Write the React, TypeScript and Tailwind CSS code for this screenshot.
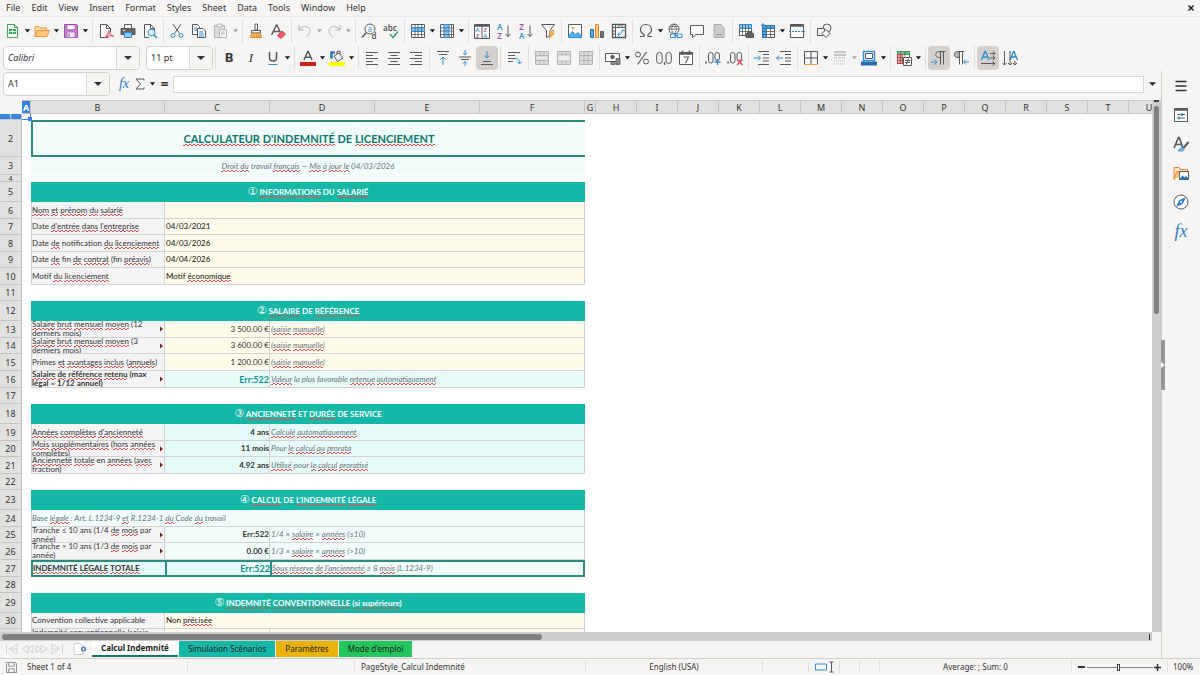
import { Fragment } from "react";
import type { ReactNode } from "react";
import clsx from "clsx";

const GRAY = "#57595b";
const BLUE = "#2f8fd6";

/* ---------- icons ---------- */

const Ic = ({ children, dim }: { children: ReactNode; dim?: boolean }) => (
  <svg
    viewBox="0 0 16 16"
    className={clsx("h-4 w-4 shrink-0 overflow-visible", dim && "opacity-40")}
    fill="none"
    stroke={GRAY}
    strokeWidth="1"
  >
    {children}
  </svg>
);

const Glyph = ({ x, y, size, fill, bold, children }: { x: number; y: number; size: number; fill?: string; bold?: boolean; children: string }) => (
  <text x={x} y={y} fontSize={size} fill={fill ?? GRAY} stroke="none" fontFamily="Noto Sans, sans-serif" fontWeight={bold ? 600 : 400}>
    {children}
  </text>
);

const icons: Record<string, ReactNode> = {
  new: <><path d="M2.5 1.5h7l3 3v10h-10z" fill="#fff" stroke="#3aa757" /><path d="M9.5 1.5v3h3" stroke="#3aa757" /><path d="M4 6h7v5H4z" fill="#3aa757" stroke="none" /><path d="M4 8.5h7M7.5 6v5" stroke="#fff" strokeWidth=".7" /></>,
  open: <><path d="M1 13.5V3.5h4l1.5 1.5h6v3" fill="#fbd9a5" stroke="#e9973a" /><path d="M1 13.5L3.5 7.5h12l-2.5 6z" fill="#fbc883" stroke="#e9973a" /></>,
  save: <><path d="M1.5 1.5h12l1 1v12h-13z" fill="#c67fd0" stroke="#9d4fb0" /><path d="M4 2h8v4.500H4z" fill="#fff" stroke="#9d4fb0" strokeWidth=".6" /><path d="M4 9h8v5.500H4z" fill="#f5e6f8" stroke="#9d4fb0" strokeWidth=".6" /><path d="M6 10.500v3.500" stroke="#7c3a90" /></>,
  pdf: <><path d="M10 14.5H2.500v-13h6l4 4v4" fill="#fff" /><path d="M8.500 1.500v4h4" /><path d="M7 14.500c2-2 3.500-5 3.500-7 1 3 2.500 5 5 5.500-3-.5-6 0-8.500 1.500z" stroke="#e0485a" fill="#f7c4ca" /></>,
  print: <><path d="M4.500 1.500h7v4h-7z" fill="#fff" /><path d="M1 5.500h14v6H1z" fill="#606466" /><path d="M4.500 9.500h7v5h-7z" fill="#8ecbf4" stroke={BLUE} /><path d="M3 7.500h2" stroke="#fff" /></>,
  preview: <><path d="M12.500 7V5.500l-4-4h-6v13H7" fill="#fff" /><path d="M8.500 1.500v4h4" /><circle cx="9.500" cy="9.500" r="3.500" fill="#d8eefc" stroke={BLUE} /><path d="M12 12l3 3" stroke={BLUE} strokeWidth="1.500" /></>,
  cut: <><path d="M4 1l6.500 9.500M12 1L5.500 10.500" /><circle cx="4" cy="12.500" r="2" stroke={BLUE} /><circle cx="12" cy="12.500" r="2" stroke={BLUE} /></>,
  copy: <><path d="M1.500 1.500h5l2 2v8h-7z" fill="#fff" /><path d="M6.500 5.500h5.500l2.500 2.500v6.500h-8z" fill="#fff" /><path d="M3 5h3M3 7h3" stroke={BLUE} /><path d="M8 9h4M8 11h5M8 13h5" stroke={BLUE} /></>,
  paste: <><path d="M1.500 2.500h10v12h-10z" fill="#bbb" /><path d="M4 1h5v3H4z" fill="#eee" /><path d="M6.500 6.500h7v8h-7z" fill="#fff" /><path d="M8 9h4M8 11h4" /></>,
  clone: <><path d="M7 1h2.500v6H7z" fill="#fff" /><path d="M3.500 7.500h9v2.500h-9z" fill="#eee" /><path d="M3.500 10.500h9l1 4h-11z" fill="#f9b86a" stroke="#e08a2c" /><path d="M6 12v2M8.500 12v2M11 12v2" stroke="#e08a2c" /></>,
  clear: <><path d="M1.500 12L6.500 2h.5l4.500 10M3.500 8.500h6" strokeWidth="1.400" /><path d="M7.500 12.500l4.500-4.500 3.500 3-4.500 4.500z" fill="#ee5a68" stroke="#d6404f" /></>,
  undo: <><path d="M2 2v5h5M2 7C5 2 13 2.500 13 8c0 3-2 4.500-4 6" /></>,
  redo: <><path d="M14 2v5H9M14 7C11 2 3 2.500 3 8c0 3 2 4.500 4 6" /></>,
  find: <><circle cx="9" cy="6" r="5" fill="#fff" /><path d="M5.500 9.500L1 14.500" strokeWidth="1.500" /><Glyph x={6.500} y={8.500} size={8} fill={BLUE}>a</Glyph><Glyph x={10.500} y={15.500} size={8} bold>d</Glyph></>,
  spell: <><Glyph x={0} y={8} size={8} bold>abc</Glyph><path d="M7 11l3 3.500 5-6" stroke="#35a66a" strokeWidth="1.500" /></>,
  row: <><path d="M1.500 1.500h13v13h-13z" fill="#fff" /><path d="M1.500 4.500h13v4h-13z" fill="#7cc0f0" stroke={BLUE} /><path d="M1.500 11.500h13M5 1.500v13M8 1.500v13M11.500 1.500v13" strokeWidth=".8" /></>,
  col: <><path d="M1.500 1.500h13v13h-13z" fill="#fff" /><path d="M5 1.500h5v13H5z" fill="#7cc0f0" stroke={BLUE} /><path d="M12.500 1.500v13M1.500 5h13M1.500 8h13M1.500 11.500h13" strokeWidth=".8" /></>,
  sort: <><path d="M.5 1.500h15v14H.5z" fill="#fff" /><path d="M.5 2.500h15" strokeWidth="2.500" /><path d="M8 3v12.500" /><Glyph x={1.500} y={9} size={6} fill={BLUE} bold>A</Glyph><Glyph x={1.700} y={15} size={6} fill="#a44fc0" bold>Z</Glyph><Glyph x={9.500} y={9} size={6} fill="#a44fc0" bold>Z</Glyph><Glyph x={9.300} y={15} size={6} fill={BLUE} bold>A</Glyph></>,
  sortAsc: <><Glyph x={1} y={7} size={8} fill={BLUE} bold>A</Glyph><Glyph x={1.200} y={15.500} size={8} fill="#a44fc0" bold>Z</Glyph><path d="M12 2.500v11M9.500 11l2.500 2.500 2.500-2.500" /></>,
  sortDesc: <><Glyph x={1.200} y={7} size={8} fill="#a44fc0" bold>Z</Glyph><Glyph x={1} y={15.500} size={8} fill={BLUE} bold>A</Glyph><path d="M12 2.500v11M9.500 11l2.500 2.500 2.500-2.500" /></>,
  filter: <><path d="M1.500 1.500h13l-4.500 6v5l-3.500 2v-7z" fill="#fff" /><path d="M12.500 7L9 11.500h2L9.500 15.500l5-5.500h-2.500l2-3z" fill="#fbb65c" stroke="#e88e24" strokeWidth=".7" /></>,
  image: <><path d="M1.500 1.500h13v13h-13z" fill="#fff" /><path d="M1.500 13l4-4.500 3 3 2.500-2 3.500 3.500v1.500h-13z" fill="#5aaeea" stroke={BLUE} /><circle cx="6" cy="5" r="1.300" fill="#f5a742" stroke="none" /></>,
  chart: <><path d="M1.500 6.500h3v8h-3z" fill="#5aaeea" stroke="#1f6db5" /><path d="M6.500 1.500h3v13h-3z" fill="#fbc883" stroke="#e08a2c" /><path d="M11.500 8.500h3v6h-3z" fill="#77797b" /></>,
  pivot: <><path d="M1.500 1.500h13v13h-13z" fill="#fff" strokeWidth="1.400" /><path d="M1.500 4.500h13M4.500 1.500v13M8 1.500v3M11 1.500v3M1.500 8h3M1.500 11h3" /><path d="M7 11.500c3 0 5-2 5-4.500M8.500 9.500L6.500 11.500l2 2M10 8.500l2-2 2 2" stroke={BLUE} /></>,
  omega: <path d="M2 13.500h4v-2C4 10.500 2.500 8.500 2.500 6.500 2.500 3.500 5 1.500 8 1.500s5.500 2 5.500 5c0 2-1.500 4-3.500 5v2h4" strokeWidth="1.200" />,
  link: <><circle cx="7" cy="6" r="5" fill="#fff" /><path d="M2 6h10M7 1c-3 3-3 7 0 10M7 1c3 3 3 7 0 10M3 3.500h8" strokeWidth=".8" /><path d="M3.500 11h5v3.500h-5zM10 11h5v3.500h-5zM7 12.700h4" fill="#f6f5f3" stroke={BLUE} /></>,
  comment: <path d="M1.500 2.500h13v9H7l-3.500 3v-3h-2z" fill="#fff" />,
  header: <><path d="M3 1.500h7l3 3v10H3z" fill="#ccc" stroke="#aaa" /><path d="M5 11.500h6" stroke="#999" /></>,
  area: <><path d="M1.500 1.500h12v11h-12z" fill="#fff" /><path d="M1.500 1.500h12v4h-12z" fill="#7cc0f0" stroke={BLUE} /><path d="M1.500 8.500h12M4.500 1.500v11M7.500 1.500v11M10.500 1.500v8" strokeWidth=".8" /><path d="M8 10.500h7.500v4H8zM9.500 8.500h4.500v2H9.500z" fill="#606466" /></>,
  freeze: <><path d="M2.500 2.500h12v12h-12z" fill="#fff" /><path d="M2.500 2.500h4v12h-4zM2.500 2.500h12v3h-12z" fill="#4c9fe0" stroke="#2a75b8" /><path d="M6.500 8.500h8M6.500 11.500h8M10.500 3v11.500M2.500 8.500h4M2.500 11.500h4" strokeWidth=".8" /><path d="M1 2h4M3 0v4" stroke={BLUE} /></>,
  split: <><path d="M1.500 1.500h13v13h-13z" fill="#fff" /><path d="M1.500 2.500h13" strokeWidth="2.500" /><path d="M0 8.500h16" stroke={BLUE} strokeDasharray="2 1" /></>,
  shapes: <><circle cx="11" cy="5" r="4" /><path d="M1.500 5.500h7v7h-7z" fill="#f6f5f3" /><path d="M10 6.500l4 4-4 4-4-4z" fill="#f6f5f3" /></>,
  underline: <><path d="M4.500 2v6c0 4 7 4 7 0V2" strokeWidth="1.500" /><path d="M3.500 14.500h9" stroke={BLUE} /></>,
  fontColor: <><path d="M4 10L7.700 1.500h.6L12 10M5.300 7.200h5.400" strokeWidth="1.500" /><path d="M0 12h16v4H0z" fill="#c9211e" stroke="none" /></>,
  highlight: <><path d="M2 2.500h4M2.500 1.500v7" stroke="#2a75b8" strokeWidth="2.500" /><path d="M5 6l5-3 4 5-5.500 3.500zM8 4V1.500l3-.5v3" fill="#eee" /><path d="M0 12h16v4H0z" fill="#ff0" stroke="none" /></>,
  left: <path d="M2 2.500h12M2 5.500h7M2 8.500h12M2 11.500h7M2 14.500h12" />,
  center: <path d="M2 2.500h12M4.500 5.500h7M2 8.500h12M4.500 11.500h7M2 14.500h12" />,
  right: <path d="M2 2.500h12M7 5.500h7M2 8.500h12M7 11.500h7M2 14.500h12" />,
  top: <><path d="M2 1.500h12M4 4.500h8" /><path d="M8 15V7M5.500 9.500L8 7l2.500 2.500" stroke={BLUE} /></>,
  middle: <><path d="M2 7h12M4 9.500h8" /><path d="M8 0v5M6 3l2 2 2-2M8 16v-4.500M6 13.500l2-2 2 2" stroke={BLUE} /></>,
  bottom: <><path d="M4 11.500h8M2 14.500h12" /><path d="M8 1v7M5.500 5.500L8 8l2.500-2.500" stroke={BLUE} /></>,
  wrap: <><path d="M2 2.500h12M2 5.500h7M2 8.500h7M2 11.500h5" /><path d="M9 8.500c3 0 4.500 1 4.500 4.500M11 11.500l2.500 2.500 2-2.500" stroke={BLUE} /></>,
  merge: <><path d="M1.500 1.500h13v13h-13z" fill="#bbb" stroke="#555" /><path d="M1.500 5.500h13M1.500 10.500h13M6 1.500v4M10 1.500v4M6 10.500v4M10 10.500v4" stroke="#555" /><path d="M3 8h10" stroke="#fff" /></>,
  mergeCells: <><path d="M1.500 1.500h13v13h-13z" fill="#bbb" stroke="#555" /><path d="M1.500 5h13M1.500 11h13M6 1.500v3.500M10 1.500v3.500M6 11v3.500M10 11v3.500" stroke="#555" /><path d="M2 5.500h12v5H2z" fill="#ddd" stroke="none" /></>,
  unmerge: <><path d="M1.500 1.500h13v13h-13z" fill="#bbb" stroke="#555" /><path d="M1.500 5.500h13M1.500 10.500h13M6 1.500v13M10 1.500v13" stroke="#555" /></>,
  currency: <><path d="M.5 3.500h14v8H.5z" fill="#fff" /><circle cx="7.500" cy="7" r="1.700" fill={GRAY} /><path d="M6 11.500h4v3H6zM11 8.500h4v6h-4z" fill="#8a8c8e" strokeWidth=".8" /></>,
  percent: <><circle cx="4" cy="4.500" r="2.500" /><circle cx="12" cy="11.500" r="2.500" /><path d="M12.500 2l-9 12.500" strokeWidth="1.200" /></>,
  number: <><rect x=".7" y="2.500" width="5.500" height="11" rx="2.700" /><path d="M8.500 12v3" strokeWidth="1.400" /><rect x="10" y="2.500" width="5.300" height="11" rx="2.600" /></>,
  date: <><path d="M1.500 2.500h13v12h-13z" fill="#fff" /><path d="M1.500 3.500h13" strokeWidth="2.500" /><path d="M4.500 .5v3M11.500 .5v3" strokeWidth="1.500" /><path d="M5.500 7h5L7.500 13" strokeWidth="1.200" /></>,
  addDec: <><path d="M1 11.500v2" strokeWidth="1.500" /><rect x="3.500" y="2.500" width="4.500" height="10.500" rx="2.200" /><rect x="10" y="2.500" width="4.500" height="8" rx="2.200" /><path d="M12.500 9v6M9.500 12h6" stroke={BLUE} strokeWidth="1.300" /></>,
  delDec: <><path d="M1 11.500v2" strokeWidth="1.500" /><rect x="3.500" y="2.500" width="4.500" height="10.500" rx="2.200" /><rect x="10" y="2.500" width="4.500" height="8" rx="2.200" /><path d="M10 9.500l5.500 5.500M15.500 9.500L10 15" stroke="#e0485a" strokeWidth="1.300" /></>,
  indent: <><path d="M4 1.500h11M9 4.500h6M9 8h6M9 11h6M4 14.500h11" /><path d="M0 8h6M4 5.500L6.500 8 4 10.500" stroke={BLUE} /></>,
  outdent: <><path d="M4 1.500h11M9 4.500h6M9 8h6M9 11h6M4 14.500h11" /><path d="M7 8H1M3 5.500L.5 8 3 10.500" stroke={BLUE} /></>,
  borders: <><path d="M1.500 14.500v-13h13v13M8 1.500v13M1.500 8h13" /><path d="M1 14.500h14" stroke="#e8a04c" /></>,
  lineStyle: <><path d="M2 2h12M2 5h12" strokeWidth="1.500" /><path d="M2 8h12" strokeDasharray="3 1" /><path d="M2 11h12M2 14h12" strokeDasharray="1 1" /></>,
  lineColor: <><path d="M2.500 1.500h11v9h-11z" fill="#fff" stroke={BLUE} strokeWidth="1.500" /><path d="M4.500 3.500h7v5h-7z" fill="#fff" /><path d="M0 11.500h16v4H0z" fill="#2a6cab" stroke="none" /></>,
  cond: <><path d="M1.500 1.500h12v12h-12z" fill="#fff" /><path d="M1.500 1.500h12v3h-12z" fill="#69c083" stroke="#3aa757" /><path d="M1.500 4.500h5v9h-5z" fill="#f4a09b" stroke="#d6404f" /><path d="M1.500 7.500h12M1.500 10.500h12M4.500 1.500v12M9 1.500v6" strokeWidth=".7" /><path d="M7.500 7.500h8v8h-8z" fill="#fff" /><path d="M9 10.500h5M9 12.500h5M13 9l-3 5.500" /></>,
  ltr: <><path d="M14.500 1.500H8.500c-5 0-5 6 0 6h1v7M9.500 1.500v13M12.500 1.500v13" /><path d="M0 12h6M3.500 9.500L6 12l-2.500 2.500" stroke={BLUE} /></>,
  rtl: <><path d="M6.500 1.500H5c-5 0-5 6 0 6h1.500z" fill="#b5b5b5" /><path d="M5 1.500h6M6.500 1.500v13M9.500 1.500v13" /><path d="M16 12h-5M13 9.500L10.500 12l2.500 2.500" stroke={BLUE} /></>,
  textH: <><path d="M1.500 10L5 1.500h.5L9 10M2.700 7h5" stroke={BLUE} strokeWidth="1.400" /><path d="M10 3.500h5M13 1.500l2 2-2 2M10 8h5M13 6l2 2-2 2M1 13.500h14M12.500 11.500l2.500 2-2.500 2" /></>,
  textV: <><path d="M8 10l3.500-8.500h.5L15.500 10M9.500 7h5" stroke={BLUE} strokeWidth="1.400" /><path d="M2.500 1v14M.5 13l2 2 2-2M8 1v14M6 13l2 2 2-2M13 11v4M11 13l2 2 2-2" /></>,
  menu: <path d="M2.500 3.500h11M2.500 8h11M2.500 12.500h11" stroke="#333" strokeWidth="1.700" />,
  props: <><path d="M1.500 1.500h13v13h-13z" fill="#fff" /><path d="M1.500 2.500h13" strokeWidth="2.500" /><path d="M4 7.500h8M4 11h8" stroke={GRAY} /><path d="M9 6v3M6 9.500v3" stroke={BLUE} strokeWidth="1.500" /></>,
  styles: <><path d="M1 12L5.500 1.500h.7L10 12M2.700 8.500h6" strokeWidth="1.700" /><path d="M15.500 6l-5 6" strokeWidth="2" /><path d="M5 14.500c2 0 2-2.500 4-3 2 0 2.500 1.500 1.500 2.500-1.500 1.300-4 1.300-5.500.5z" fill="#7cc0f0" stroke={BLUE} /></>,
  gallery: <><path d="M1 14.500v-12h5l1.500 2h7v2" fill="#fbe2c0" stroke="#e9833a" /><path d="M1 14.500l3-8h11.500" stroke="#e9833a" fill="#fbc883" /><path d="M6.500 6.500h9v8h-9z" fill="#fff" /><path d="M6.500 14l3-3.500 2 2 1.500-1.500 2.500 2.500v1h-9z" fill="#2a75b8" stroke="none" /></>,
  navigator: <><circle cx="8" cy="8" r="7" fill="#fff" /><path d="M12 4l-2.500 5.500L4 12l2.500-5.500z" fill="#2f8fd6" stroke="#2a75b8" /><circle cx="8" cy="8" r="1" fill="#fff" stroke="none" /></>,
};

/* ---------- toolbar parts ---------- */

const Tool = ({ name, label, active, dim, children }: { name?: string; label: string; active?: boolean; dim?: boolean; children?: ReactNode }) => (
  <button
    type="button"
    aria-label={label}
    className={clsx("flex h-6 w-[22px] shrink-0 items-center justify-center rounded-sm", active && "bg-[#d3d0cd]")}
  >
    {children ?? <Ic dim={dim}>{icons[name as string]}</Ic>}
  </button>
);

const Arrow = ({ label, dim }: { label: string; dim?: boolean }) => (
  <button type="button" aria-label={`${label} options`} className="flex h-6 w-[7px] shrink-0 items-center justify-center">
    <svg viewBox="0 0 6 4" className={clsx("h-1 w-1.5", dim && "opacity-35")}><path d="M0 .2h5L2.500 3.500z" fill="#111" /></svg>
  </button>
);

const Sep = ({ wide }: { wide?: boolean }) => (
  <div className={clsx("flex h-6 shrink-0 justify-center", wide ? "w-1.5" : "w-[5px]")}>
    <div className="h-full w-px bg-[#e1dfdc]" />
  </div>
);

type Item = { name: string; label: string; split?: boolean; dim?: boolean; active?: boolean; node?: ReactNode };

const standard: Item[][] = [
  [{ name: "new", label: "New", split: true }, { name: "open", label: "Open", split: true }, { name: "save", label: "Save", split: true }],
  [{ name: "pdf", label: "Export as PDF" }, { name: "print", label: "Print" }, { name: "preview", label: "Print Preview" }],
  [{ name: "cut", label: "Cut" }, { name: "copy", label: "Copy" }, { name: "paste", label: "Paste", split: true, dim: true }],
  [{ name: "clone", label: "Clone Formatting" }, { name: "clear", label: "Clear Formatting" }],
  [{ name: "undo", label: "Undo", split: true, dim: true }, { name: "redo", label: "Redo", split: true, dim: true }],
  [{ name: "find", label: "Find and Replace" }, { name: "spell", label: "Spelling" }],
  [{ name: "row", label: "Row", split: true }, { name: "col", label: "Column", split: true }],
  [{ name: "sort", label: "Sort" }, { name: "sortAsc", label: "Sort Ascending" }, { name: "sortDesc", label: "Sort Descending" }, { name: "filter", label: "AutoFilter" }],
  [{ name: "image", label: "Image" }, { name: "chart", label: "Chart" }, { name: "pivot", label: "Pivot Table" }],
  [{ name: "omega", label: "Special Character", split: true }, { name: "link", label: "Hyperlink" }, { name: "comment", label: "Comment" }, { name: "header", label: "Headers and Footers" }],
  [{ name: "area", label: "Print Area" }, { name: "freeze", label: "Freeze Rows and Columns", split: true }, { name: "split", label: "Split Window" }],
  [{ name: "shapes", label: "Draw Functions" }],
];

const formatting: Item[][] = [
  [
    { name: "bold", label: "Bold", node: <span className="text-[13px] font-bold text-[#333]">B</span> },
    { name: "italic", label: "Italic", node: <span className="font-['Liberation_Serif',serif] text-[13px] text-[#333] italic">I</span> },
    { name: "underline", label: "Underline", split: true },
  ],
  [{ name: "fontColor", label: "Font Color", split: true }, { name: "highlight", label: "Background Color", split: true }],
  [{ name: "left", label: "Align Left" }, { name: "center", label: "Center Horizontally" }, { name: "right", label: "Align Right" }],
  [{ name: "top", label: "Align Top" }, { name: "middle", label: "Center Vertically" }, { name: "bottom", label: "Align Bottom", active: true }],
  [{ name: "wrap", label: "Wrap Text" }],
  [{ name: "merge", label: "Merge and Center", dim: true }, { name: "mergeCells", label: "Merge Cells", dim: true }, { name: "unmerge", label: "Unmerge Cells", dim: true }],
  [{ name: "currency", label: "Currency", split: true }, { name: "percent", label: "Percent" }, { name: "number", label: "Number" }, { name: "date", label: "Date" }],
  [{ name: "addDec", label: "Add Decimal Place" }, { name: "delDec", label: "Delete Decimal Place" }],
  [{ name: "indent", label: "Increase Indent" }, { name: "outdent", label: "Decrease Indent" }],
  [{ name: "borders", label: "Borders", split: true }, { name: "lineStyle", label: "Border Style", split: true, dim: true }, { name: "lineColor", label: "Border Color", split: true }],
  [{ name: "cond", label: "Conditional", split: true }],
  [{ name: "ltr", label: "Left-To-Right", active: true }, { name: "rtl", label: "Right-To-Left" }],
  [{ name: "textH", label: "Text direction left to right", active: true }, { name: "textV", label: "Text direction top to bottom" }],
];

const Groups = ({ groups }: { groups: Item[][] }) => (
  <>
    {groups.map((group, i) => (
      <Fragment key={i}>
        {i > 0 && <Sep wide={groups[i - 1][groups[i - 1].length - 1].split || groups[i - 1].length === 1} />}
        {group.map((it) => (
          <Fragment key={it.name}>
            <Tool name={it.name} label={it.label} active={it.active} dim={it.dim}>{it.node}</Tool>
            {it.split && <Arrow label={it.label} dim={it.dim} />}
          </Fragment>
        ))}
      </Fragment>
    ))}
  </>
);

const Combo = ({ label, value, className }: { label: string; value: string; className: string }) => (
  <div className={clsx("flex h-6 shrink-0 overflow-hidden rounded border border-[#d2cfcb] bg-white", className)}>
    <input aria-label={label} defaultValue={value} className="min-w-0 flex-1 bg-transparent px-1 outline-none" />
    <button type="button" aria-label={`${label} list`} className="flex w-[23px] items-center justify-center border-l border-[#dedbd8] bg-[#f6f5f3]">
      <svg viewBox="0 0 8 4" className="h-1 w-2"><path d="M0 0h8L4 4z" fill="#333" /></svg>
    </button>
  </div>
);

/* ---------- sheet ---------- */

// two offset dashed lines make the small zigzag under a misspelt word
const squiggle =
  "pb-px bg-repeat-x bg-[linear-gradient(90deg,#e05050_50%,transparent_50%),linear-gradient(90deg,transparent_50%,#e05050_50%)] bg-[length:4px_1px] bg-[position:0_100%,0_calc(100%-1px)]";

// words between tildes carry the spell-check underline
const Spell = ({ text }: { text: string }) => (
  <span>
    {text.split("~").map((part, i) =>
      i % 2 ? <span key={i} className={squiggle}>{part}</span> : <Fragment key={i}>{part}</Fragment>
    )}
  </span>
);

type Row = {
  n: number;
  h: number;
  kind: "blank" | "title" | "sub" | "section" | "input" | "calc" | "note" | "total";
  label?: string;
  value?: string;
  hint?: string;
  num?: string;
  wrap?: boolean;
  strong?: boolean;
  tone?: string;
};

const YELLOW = "bg-[#fffbeb]";
const MINT = "bg-[#f0fdfa]";
const AQUA = "bg-[#e6fbf8]";

const rows: Row[] = [
  { n: 1, h: 6, kind: "blank" },
  { n: 2, h: 37, kind: "title", label: "~CALCULATEUR~ ~D'INDEMNITÉ~ DE ~LICENCIEMENT~" },
  { n: 3, h: 18, kind: "sub", label: "~Droit~ ~du~ travail ~français~ — ~Mis~ ~à~ ~jour~ ~le~ 04/03/2026" },
  { n: 4, h: 7, kind: "blank" },
  { n: 5, h: 20, kind: "section", num: "①", label: "~INFORMATIONS~ DU ~SALARIÉ~" },
  { n: 6, h: 17, kind: "input", label: "~Nom~ ~et~ ~prénom~ ~du~ ~salarié~", value: "" },
  { n: 7, h: 16, kind: "input", label: "Date ~d'entrée~ ~dans~ ~l'entreprise~", value: "04/03/2021" },
  { n: 8, h: 17, kind: "input", label: "Date ~de~ notification ~du~ ~licenciement~", value: "04/03/2026" },
  { n: 9, h: 16, kind: "input", label: "Date ~de~ fin ~de~ ~contrat~ (fin ~préavis~)", value: "04/04/2026" },
  { n: 10, h: 17, kind: "input", label: "Motif ~du~ ~licenciement~", value: "Motif ~économique~" },
  { n: 11, h: 16, kind: "blank" },
  { n: 12, h: 20, kind: "section", num: "②", label: "~SALAIRE~ DE ~RÉFÉRENCE~" },
  { n: 13, h: 17, kind: "calc", label: "~Salaire~ ~brut~ ~mensuel~ ~moyen~ (12 ~derniers~ ~mois~)", value: "3 500.00 €", hint: "(~saisie~ ~manuelle~)", wrap: true, tone: YELLOW },
  { n: 14, h: 16, kind: "calc", label: "~Salaire~ ~brut~ ~mensuel~ ~moyen~ (3 ~derniers~ ~mois~)", value: "3 600.00 €", hint: "(~saisie~ ~manuelle~)", wrap: true, tone: YELLOW },
  { n: 15, h: 17, kind: "calc", label: "Primes ~et~ ~avantages~ ~inclus~ (~annuels~)", value: "1 200.00 €", hint: "(~saisie~ ~manuelle~)", tone: YELLOW },
  { n: 16, h: 17, kind: "calc", label: "~Salaire~ ~de~ ~référence~ ~retenu~ (max ~légal~ = 1/12 ~annuel~)", value: "Err:522", hint: "~Valeur~ la plus favorable ~retenue~ ~automatiquement~", wrap: true, strong: true, tone: AQUA },
  { n: 17, h: 16, kind: "blank" },
  { n: 18, h: 20, kind: "section", num: "③", label: "~ANCIENNETÉ~ ET ~DURÉE~ DE SERVICE" },
  { n: 19, h: 17, kind: "calc", label: "~Années~ ~complètes~ ~d'ancienneté~", value: "4 ans", hint: "~Calculé~ ~automatiquement~", tone: AQUA },
  { n: 20, h: 16, kind: "calc", label: "~Mois~ ~supplémentaires~ (~hors~ ~années~ ~complètes~)", value: "11 mois", hint: "Pour ~le~ ~calcul~ ~au~ ~prorata~", wrap: true, tone: AQUA },
  { n: 21, h: 17, kind: "calc", label: "~Ancienneté~ ~totale~ en ~années~ (~avec~ ~fraction~)", value: "4.92 ans", hint: "~Utilisé~ pour ~le~ ~calcul~ ~proratisé~", wrap: true, tone: AQUA },
  { n: 22, h: 16, kind: "blank" },
  { n: 23, h: 20, kind: "section", num: "④", label: "~CALCUL~ DE ~L'INDEMNITÉ~ ~LÉGALE~" },
  { n: 24, h: 17, kind: "note", label: "Base ~légale~ : Art. L.1234-9 ~et~ R.1234-1 ~du~ Code ~du~ travail" },
  { n: 25, h: 16, kind: "calc", label: "Tranche ≤ 10 ans (1/4 ~de~ ~mois~ par ~année~)", value: "Err:522", hint: "1/4 × ~salaire~ × ~années~ (≤10)", wrap: true, tone: MINT },
  { n: 26, h: 17, kind: "calc", label: "Tranche > 10 ans (1/3 ~de~ ~mois~ par ~année~)", value: "0.00 €", hint: "1/3 × ~salaire~ × ~années~ (>10)", wrap: true, tone: MINT },
  { n: 27, h: 17, kind: "total", label: "~INDEMNITÉ~ ~LÉGALE~ ~TOTALE~", value: "Err:522", hint: "~Sous~ ~réserve~ ~de~ ~l'ancienneté~ ≥ 8 ~mois~ (L.1234-9)" },
  { n: 28, h: 16, kind: "blank" },
  { n: 29, h: 20, kind: "section", num: "⑤", label: "~INDEMNITÉ~ ~CONVENTIONNELLE~ (~si~ ~supérieure~)" },
  { n: 30, h: 16, kind: "input", label: "Convention collective applicable", value: "Non ~précisée~" },
  { n: 31, h: 17, kind: "calc", label: "~Indemnité~ ~conventionnelle~ (saisie ~manuelle~)", value: "", hint: "", wrap: true, tone: YELLOW },
];

const rowHeight: Record<number, string> = { 6: "h-1.5", 7: "h-[7px]", 16: "h-4", 17: "h-[17px]", 18: "h-[18px]", 20: "h-5", 37: "h-[37px]" };
const innerHeight: Record<number, string> = { 16: "h-[15px]", 17: "h-4" };

const line = "border-r border-b border-[#d3d3d3]";

const LabelCell = ({ row }: { row: Row }) => (
  <td className={clsx("border-l bg-[#f4f4f5]", line)}>
    <div className={clsx("flex items-center overflow-hidden", innerHeight[row.h], row.strong && "font-bold")}>
      <div className={clsx("min-w-0 flex-1", !row.wrap && "whitespace-nowrap")}>
        <Spell text={row.label ?? ""} />
      </div>
      {row.wrap && (
        <svg viewBox="0 0 4 6" className="h-1.5 w-1 shrink-0"><path d="M0 .5l3 2.500L0 5.500z" fill="#7c1f1f" /></svg>
      )}
    </div>
  </td>
);

const RowCells = ({ row }: { row: Row }) => {
  switch (row.kind) {
    case "title":
      return (
        <td colSpan={5} className="border-y-2 border-l-2 border-[#2f8a7e] bg-[#f0fdfa] text-center text-[11px] leading-4 font-bold text-[#0f766e]">
          <Spell text={row.label ?? ""} />
        </td>
      );
    case "sub":
      return (
        <td colSpan={5} className="bg-[#f0fdfa] text-center text-[#6b7280] italic">
          <Spell text={row.label ?? ""} />
        </td>
      );
    case "section":
      return (
        <td colSpan={5} className="bg-[#14b8a6] text-center font-bold text-white">
          <span className="font-['DejaVu_Sans',sans-serif] text-[11px] font-normal">{row.num}</span> <Spell text={row.label ?? ""} />
        </td>
      );
    case "input":
      return (
        <>
          <LabelCell row={row} />
          <td colSpan={4} className={clsx("pl-px text-[#111]", line, YELLOW)}>
            <Spell text={row.value ?? ""} />
          </td>
        </>
      );
    case "note":
      return (
        <td colSpan={5} className={clsx("border-l text-[#6b7280] italic", line, MINT)}>
          <Spell text={row.label ?? ""} />
        </td>
      );
    case "calc":
      return (
        <>
          <LabelCell row={row} />
          <td className={clsx("text-right", line, row.tone, row.strong ? "text-[9px] font-bold text-[#0d9488]" : row.tone !== YELLOW && "font-bold")}>
            {row.value}
          </td>
          <td colSpan={3} className={clsx("pl-px text-[#6b7280] italic", line, row.tone)}>
            <Spell text={row.hint ?? ""} />
          </td>
        </>
      );
    case "total":
      return (
        <>
          <td className="border-y-2 border-l-2 border-[#2f8a7e] bg-[#e6fbf8] font-bold"><Spell text={row.label ?? ""} /></td>
          <td className="border-y-2 border-l-2 border-[#2f8a7e] bg-[#e6fbf8] text-right text-[9px] font-bold text-[#0d9488]">{row.value}</td>
          <td colSpan={3} className="border-2 border-[#2f8a7e] bg-[#f0fdfa] text-[#6b7280] italic"><Spell text={row.hint ?? ""} /></td>
        </>
      );
    default:
      return <td colSpan={5} />;
  }
};

const letters = "ABCDEFGHIJKLMNOPQRSTU".split("");

const Sheet = () => (
  <table className="w-px table-fixed border-separate border-spacing-0 font-['Lato','DejaVu_Sans',sans-serif] text-[8px] leading-[9px] text-[#333]">
    <colgroup>
      <col className="w-[22px]" />
      <col className="w-[9px]" />
      <col className="w-[134px]" />
      <col className="w-[105px]" span={4} />
      <col className="w-[11px]" />
      <col className="w-[41px]" span={14} />
    </colgroup>
    <thead>
      <tr className="h-3.5 font-['Noto_Sans',sans-serif] text-[9px]">
        <td className="bg-[#f6f5f3]" />
        {letters.map((l) => (
          <th key={l} scope="col" className={clsx("border-t border-r border-b border-[#c4c4c4] text-center", l === "A" ? "bg-[#3584e4] font-bold text-white" : "bg-[#e1e1e0] font-normal")}>
            {l}
          </th>
        ))}
      </tr>
    </thead>
    <tbody>
      {rows.map((row) => (
        <tr key={row.n} className={rowHeight[row.h]}>
          <th
            scope="row"
            className={clsx(
              "border-r border-b border-[#c4c4c4] text-center font-['Noto_Sans',sans-serif] font-normal",
              row.n === 1 ? "bg-[#3584e4] text-white" : "bg-[#e1e1e0]",
              row.h < 8 ? "text-[7px] leading-[5px]" : "text-[9px]"
            )}
          >
            {row.n}
          </th>
          {row.n === 1 ? (
            <td className="relative border-r border-b border-[#3584e4]">
              <span className="absolute -right-0.5 -bottom-0.5 h-1 w-1 bg-[#3584e4]" />
            </td>
          ) : (
            <td />
          )}
          <RowCells row={row} />
          <td colSpan={15} />
        </tr>
      ))}
    </tbody>
  </table>
);

/* ---------- window ---------- */

const menus = ["File", "Edit", "View", "Insert", "Format", "Styles", "Sheet", "Data", "Tools", "Window", "Help"];

const tabs = [
  { name: "Calcul Indemnité", tone: "border-b-2 border-[#0f766e] bg-white font-bold" },
  { name: "Simulation Scénarios", tone: "bg-[#14b8a6]" },
  { name: "Paramètres", tone: "bg-[#eab308]" },
  { name: "Mode d'emploi", tone: "bg-[#22c55e]" },
];

const Sidebar = () => (
  <aside className="flex w-[39px] shrink-0 flex-col items-center gap-[13px] border-l border-[#d2cfcb] pt-[7px]">
    {["menu", "props", "styles", "gallery", "navigator"].map((name) => (
      <button key={name} type="button" aria-label={name} className="flex h-4 w-4"><Ic>{icons[name]}</Ic></button>
    ))}
    <button type="button" aria-label="functions" className="font-['Liberation_Serif',serif] text-lg leading-4 text-[#2f7fc6] italic">fx</button>
  </aside>
);

const App = () => {
  return (
    <div className="flex h-screen flex-col overflow-hidden bg-[#f6f5f3] font-['Noto_Sans',sans-serif] text-[9px] text-[#333]">
      <nav className="flex h-[17px] shrink-0 items-center gap-[11px] border-b border-[#e8e6e3] px-1.5">
        {menus.map((m) => (
          <button key={m} type="button">{m}</button>
        ))}
        <button type="button" aria-label="Close" className="ml-auto">
          <svg viewBox="0 0 6 6" className="h-1.5 w-1.5"><path d="M.5 .5l5 5M5.500 .5l-5 5" stroke="#222" strokeWidth="1.500" /></svg>
        </button>
      </nav>

      <div className="flex h-[27px] shrink-0 items-center pl-0.5">
        <Groups groups={standard} />
      </div>

      <div className="flex h-[27px] shrink-0 items-center pl-[3px]">
        <Combo label="Font Name" value="Calibri" className="mr-1.5 w-[137px] italic" />
        <Combo label="Font Size" value="11 pt" className="w-[67px]" />
        <Sep />
        <Groups groups={formatting} />
      </div>

      <div className="flex min-h-0 flex-1">
        <div className="flex min-w-0 flex-1 flex-col">
          <div className="flex h-[29px] shrink-0 items-center pb-[3px] pl-[3px]">
            <Combo label="Name Box" value="A1" className="mr-[7px] w-[107px]" />
            <button type="button" aria-label="Function Wizard" className="w-3.5 font-['Liberation_Serif',serif] text-sm text-[#2f7fc6] italic">fx</button>
            <button type="button" aria-label="Select Function" className="flex w-[18px] justify-center">
              <svg viewBox="0 0 10 12" className="h-3 w-2.5"><path d="M9 2.500V1H1l4.500 5L1 11h8V9.500" fill="none" stroke={GRAY} /></svg>
            </button>
            <Arrow label="Select Function" />
            <button type="button" aria-label="Formula" className="w-[17px] text-sm leading-4 font-bold">=</button>
            <input aria-label="Input line" className="h-[17px] min-w-0 flex-1 border border-[#d8d5d2] bg-white px-1 outline-none" />
            <button type="button" aria-label="Expand Formula Bar" className="flex w-[17px] justify-center">
              <svg viewBox="0 0 8 4" className="h-1 w-[7px]"><path d="M0 0h8L4 4z" fill="#222" /></svg>
            </button>
          </div>

          <div className="flex min-h-0 flex-1">
            <div className="min-w-0 flex-1 overflow-hidden bg-white">
              <Sheet />
            </div>
            <div className="w-[9px] shrink-0 bg-[#cdcdcd] px-0.5">
              <div className="h-0.5 bg-[#444]" />
              <div className="mt-1 h-[208px] rounded-full bg-[#7f7f7f]" />
            </div>
          </div>

          <div className="flex h-[9px] shrink-0 bg-[#cdcdcd]">
            <div className="flex min-w-0 flex-1 items-center px-0.5">
              <div className="h-1.5 w-[47%] rounded-full bg-[#7f7f7f]" />
              <div className="ml-auto h-1.5 w-px bg-[#333]" />
            </div>
            <div className="w-[9px] bg-[#f6f5f3]" />
          </div>

          <div className="flex h-[17px] shrink-0 items-start pl-[5px]">
            <div className="flex w-[62px] shrink-0 pt-0.5">
              {["M1.500 1v10M12 1L5 6l7 5zM4 6h8", "M8 2L2 6l6 4zM13 2L8 6l5 4z", "M6 2l6 4-6 4zM1 2l5 4-5 4z", "M12.500 1v10M2 1l7 5-7 5zM2 6h8"].map((d, i) => (
                <button key={d} type="button" aria-label={["First Sheet", "Previous Sheet", "Next Sheet", "Last Sheet"][i]}>
                  <svg viewBox="0 0 15 12" className="h-3 w-[15px]" fill="none" stroke="#d6d3d0"><path d={d} /></svg>
                </button>
              ))}
            </div>
            <button type="button" aria-label="Add Sheet" className="flex w-[25px] shrink-0 justify-center pt-0.5">
              <svg viewBox="0 0 14 12" className="h-3 w-3.5"><path d="M1 .5h6l3 3v8H1z" fill="#fff" stroke="#cfccc9" /><circle cx="10.500" cy="6" r="2.500" fill="#3b6fc4" /><path d="M9 6h3M10.500 4.500v3" stroke="#fff" strokeWidth=".8" /></svg>
            </button>
            {tabs.map((t) => (
              <button key={t.name} type="button" className={clsx("mr-px flex h-4 items-center px-[9px] text-[8px] whitespace-nowrap text-[#222]", t.tone)}>{t.name}</button>
            ))}
          </div>
        </div>
        <div className="relative flex shrink-0">
          <Sidebar />
          <button type="button" aria-label="Hide sidebar" className="absolute top-[269px] left-0 flex h-[50px] w-1 items-center bg-[#969696]">
            <svg viewBox="0 0 4 6" className="h-1.5 w-1"><path d="M0 0l4 3-4 3z" fill="#fff" /></svg>
          </button>
        </div>
      </div>

      <footer className="flex h-[17px] shrink-0 items-center border-t border-[#d2cfcb] text-[8px] leading-3">
        <div className="flex w-[187px] items-center gap-2.5 pl-1.5">
          <svg viewBox="0 0 12 12" className="h-[11px] w-[11px]" fill="none" stroke="#888"><path d="M.5 .5h10l1 1v10H.5zM3 .5v4h6v-4M3 11.500v-4h6v4" /></svg>
          <span>Sheet 1 of 4</span>
        </div>
        <div className="w-[167px] border-l border-[#e1dfdc]">&nbsp;</div>
        <div className="w-[231px] border-l border-[#e1dfdc] pl-1.5">PageStyle_Calcul Indemnité</div>
        <div className="w-[177px] border-l border-[#e1dfdc] text-center">English (USA)</div>
        <div className="w-[46px] border-l border-[#e1dfdc]">&nbsp;</div>
        <div className="flex w-[31px] items-center justify-center border-l border-[#e1dfdc]">
          <svg viewBox="0 0 19 12" className="h-3 w-[19px]" fill="none"><path d="M.5 3h11v6H.5z" stroke={BLUE} /><path d="M14.500 1h4M14.500 11h4M16.500 1v10" stroke={GRAY} /></svg>
        </div>
        <div className="w-5 border-l border-[#e1dfdc]">&nbsp;</div>
        <div className="w-5 border-l border-[#e1dfdc]">&nbsp;</div>
        <div className="min-w-0 flex-1 border-l border-[#e1dfdc] text-center">Average: ; Sum: 0</div>
        <div className="flex w-24 items-center justify-between border-l border-[#e1dfdc] px-1.5">
          <button type="button" aria-label="Zoom Out" className="flex h-3 w-[7px] items-center"><span className="h-0.5 w-full bg-[#333]" /></button>
          <input
            type="range"
            aria-label="Zoom"
            defaultValue={49}
            className="h-2 w-[66px] appearance-none bg-transparent [&::-webkit-slider-runnable-track]:h-px [&::-webkit-slider-runnable-track]:bg-[#8a8a8a] [&::-webkit-slider-thumb]:-mt-[3px] [&::-webkit-slider-thumb]:h-[7px] [&::-webkit-slider-thumb]:w-[3px] [&::-webkit-slider-thumb]:appearance-none [&::-webkit-slider-thumb]:border [&::-webkit-slider-thumb]:border-[#444] [&::-webkit-slider-thumb]:bg-white"
          />
          <button type="button" aria-label="Zoom In" className="flex h-3 w-[7px] items-center">
            <svg viewBox="0 0 7 7" className="h-[7px] w-[7px]"><path d="M0 3.500h7M3.500 0v7" stroke="#333" strokeWidth="1.500" /></svg>
          </button>
        </div>
        <div className="w-[33px] border-l border-[#e1dfdc] pl-[5px]">100%</div>
      </footer>
    </div>
  );
};

export default App;
